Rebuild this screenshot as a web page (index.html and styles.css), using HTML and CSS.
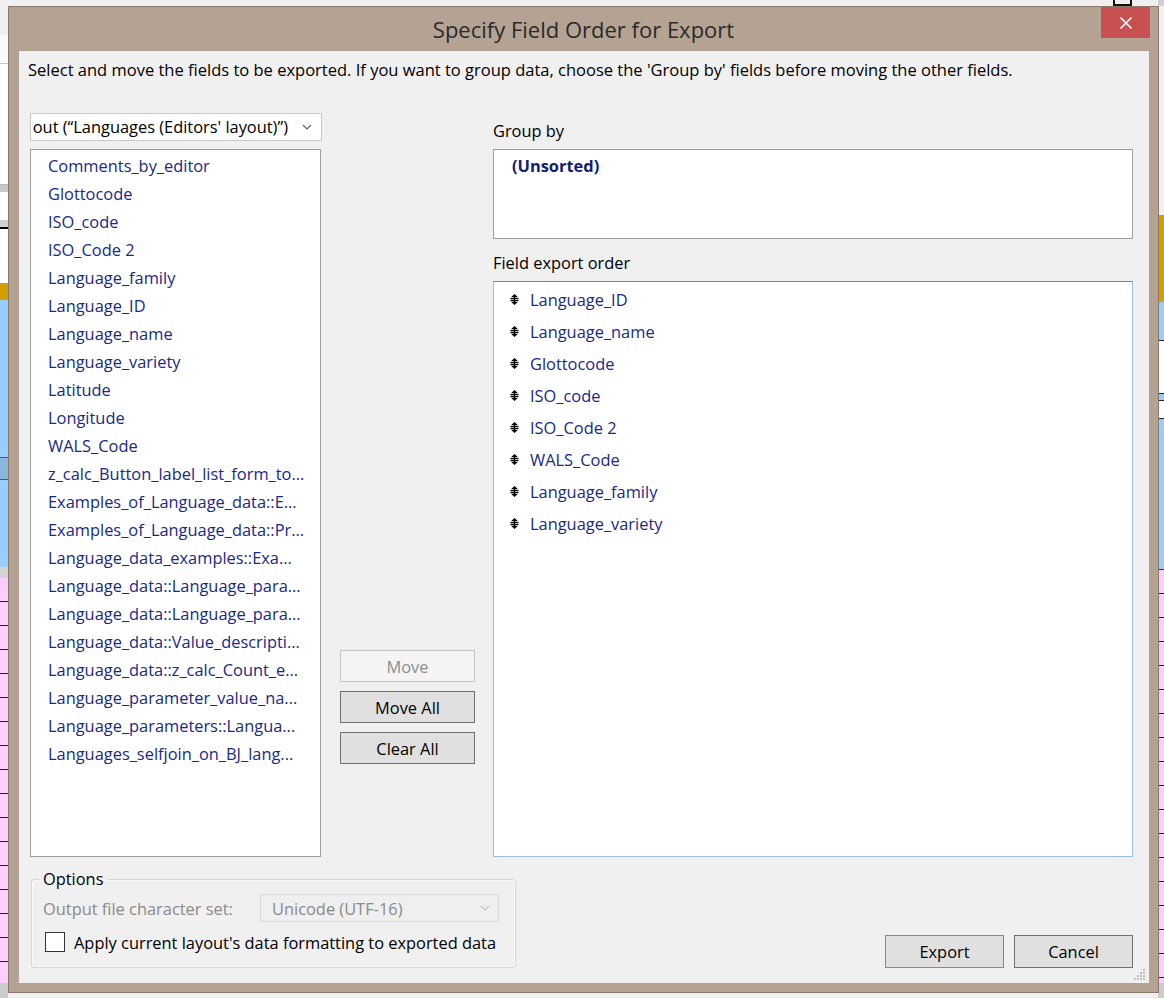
FILE: index.html
```html
<!DOCTYPE html>
<html lang="en">
<head>
<meta charset="utf-8">
<title>Specify Field Order for Export</title>
<link rel="stylesheet" href="styles.css">
</head>
<body>
<div class="backdrop">
  <div class="strip strip-left">
    <div class="seg s-head"></div>
    <div class="seg s-white1"></div>
    <div class="seg s-line"></div>
    <div class="seg s-white2"></div>
    <div class="seg s-grey"></div>
    <div class="seg s-white3"></div>
    <div class="seg s-grey2"></div>
    <div class="seg s-black"></div>
    <div class="seg s-white4"></div>
    <div class="seg s-gold"></div>
    <div class="seg s-blue1"></div>
    <div class="seg s-blue2"></div>
    <div class="seg s-blue3"></div>
    <div class="seg s-grey3"></div>
    <div class="seg s-pink"></div>
    <div class="seg s-foot"></div>
  </div>
  <div class="strip strip-right">
    <div class="seg r-head"></div>
    <div class="seg r-light"></div>
    <div class="seg r-gold"></div>
    <div class="seg r-blue"></div>
    <div class="seg r-box"></div>
    <div class="seg r-blue2"></div>
    <div class="seg r-box2"></div>
    <div class="seg r-blue3"></div>
    <div class="seg r-pink"></div>
    <div class="seg s-foot"></div>
  </div>
  <div class="top-icon"></div>
</div>

<div class="dialog">
  <div class="titlebar">
    <div class="title">Specify Field Order for Export</div>
    <div class="close" aria-label="Close">
      <svg width="14" height="14" viewBox="0 0 14 14"><path d="M1.5 1.5 L12.5 12.5 M12.5 1.5 L1.5 12.5" stroke="#fff" stroke-width="1.6" fill="none"/></svg>
    </div>
  </div>

  <div class="client">
    <p class="intro">Select and move the fields to be exported. If you want to group data, choose the 'Group by' fields before moving the other fields.</p>

    <div class="main">
      <div class="col-left">
        <div class="combo">
          <div class="combo-clip"><span class="combo-text">Current Layout (“Languages (Editors' layout)”)</span></div>
          <svg class="chev" width="10" height="6" viewBox="0 0 10 6"><path d="M1 1 L5 5 L9 1" stroke="#606060" stroke-width="1.2" fill="none"/></svg>
        </div>
        <ul class="listbox source">
          <li>Comments_by_editor</li>
          <li>Glottocode</li>
          <li>ISO_code</li>
          <li>ISO_Code 2</li>
          <li>Language_family</li>
          <li>Language_ID</li>
          <li>Language_name</li>
          <li>Language_variety</li>
          <li>Latitude</li>
          <li>Longitude</li>
          <li>WALS_Code</li>
          <li>z_calc_Button_label_list_form_to...</li>
          <li>Examples_of_Language_data::E...</li>
          <li>Examples_of_Language_data::Pr...</li>
          <li>Language_data_examples::Exa...</li>
          <li>Language_data::Language_para...</li>
          <li>Language_data::Language_para...</li>
          <li>Language_data::Value_descripti...</li>
          <li>Language_data::z_calc_Count_e...</li>
          <li>Language_parameter_value_na...</li>
          <li>Language_parameters::Langua...</li>
          <li>Languages_selfjoin_on_BJ_lang...</li>
        </ul>
      </div>

      <div class="col-mid">
        <button class="btn btn-disabled" type="button">Move</button>
        <button class="btn" type="button">Move All</button>
        <button class="btn" type="button">Clear All</button>
      </div>

      <div class="col-right">
        <div class="label">Group by</div>
        <div class="box group-box"><div class="unsorted">(Unsorted)</div></div>
        <div class="label label-order">Field export order</div>
        <ul class="box order-box">
          <li><svg class="grip" width="9" height="11" viewBox="0 0 9 11"><path d="M4.5 0 L8 3.2 H1 Z M1 7.8 H8 L4.5 11 Z" fill="#000"/><rect x="0.5" y="4" width="8" height="1.2" fill="#000"/><rect x="0.5" y="5.9" width="8" height="1.2" fill="#000"/><rect x="3.9" y="2" width="1.2" height="7" fill="#000"/></svg><span>Language_ID</span></li>
          <li><svg class="grip" width="9" height="11" viewBox="0 0 9 11"><path d="M4.5 0 L8 3.2 H1 Z M1 7.8 H8 L4.5 11 Z" fill="#000"/><rect x="0.5" y="4" width="8" height="1.2" fill="#000"/><rect x="0.5" y="5.9" width="8" height="1.2" fill="#000"/><rect x="3.9" y="2" width="1.2" height="7" fill="#000"/></svg><span>Language_name</span></li>
          <li><svg class="grip" width="9" height="11" viewBox="0 0 9 11"><path d="M4.5 0 L8 3.2 H1 Z M1 7.8 H8 L4.5 11 Z" fill="#000"/><rect x="0.5" y="4" width="8" height="1.2" fill="#000"/><rect x="0.5" y="5.9" width="8" height="1.2" fill="#000"/><rect x="3.9" y="2" width="1.2" height="7" fill="#000"/></svg><span>Glottocode</span></li>
          <li><svg class="grip" width="9" height="11" viewBox="0 0 9 11"><path d="M4.5 0 L8 3.2 H1 Z M1 7.8 H8 L4.5 11 Z" fill="#000"/><rect x="0.5" y="4" width="8" height="1.2" fill="#000"/><rect x="0.5" y="5.9" width="8" height="1.2" fill="#000"/><rect x="3.9" y="2" width="1.2" height="7" fill="#000"/></svg><span>ISO_code</span></li>
          <li><svg class="grip" width="9" height="11" viewBox="0 0 9 11"><path d="M4.5 0 L8 3.2 H1 Z M1 7.8 H8 L4.5 11 Z" fill="#000"/><rect x="0.5" y="4" width="8" height="1.2" fill="#000"/><rect x="0.5" y="5.9" width="8" height="1.2" fill="#000"/><rect x="3.9" y="2" width="1.2" height="7" fill="#000"/></svg><span>ISO_Code 2</span></li>
          <li><svg class="grip" width="9" height="11" viewBox="0 0 9 11"><path d="M4.5 0 L8 3.2 H1 Z M1 7.8 H8 L4.5 11 Z" fill="#000"/><rect x="0.5" y="4" width="8" height="1.2" fill="#000"/><rect x="0.5" y="5.9" width="8" height="1.2" fill="#000"/><rect x="3.9" y="2" width="1.2" height="7" fill="#000"/></svg><span>WALS_Code</span></li>
          <li><svg class="grip" width="9" height="11" viewBox="0 0 9 11"><path d="M4.5 0 L8 3.2 H1 Z M1 7.8 H8 L4.5 11 Z" fill="#000"/><rect x="0.5" y="4" width="8" height="1.2" fill="#000"/><rect x="0.5" y="5.9" width="8" height="1.2" fill="#000"/><rect x="3.9" y="2" width="1.2" height="7" fill="#000"/></svg><span>Language_family</span></li>
          <li><svg class="grip" width="9" height="11" viewBox="0 0 9 11"><path d="M4.5 0 L8 3.2 H1 Z M1 7.8 H8 L4.5 11 Z" fill="#000"/><rect x="0.5" y="4" width="8" height="1.2" fill="#000"/><rect x="0.5" y="5.9" width="8" height="1.2" fill="#000"/><rect x="3.9" y="2" width="1.2" height="7" fill="#000"/></svg><span>Language_variety</span></li>
        </ul>
      </div>
    </div>

    <div class="bottom">
      <fieldset class="options">
        <legend>Options</legend>
        <div class="opt-row">
          <span class="opt-label">Output file character set:</span>
          <div class="select-disabled">
            <span>Unicode (UTF-16)</span>
            <svg width="10" height="6" viewBox="0 0 10 6"><path d="M1 1 L5 5 L9 1" stroke="#c4c4c4" stroke-width="1.2" fill="none"/></svg>
          </div>
        </div>
        <label class="check-row">
          <span class="checkbox"></span>
          <span class="check-label">Apply current layout's data formatting to exported data</span>
        </label>
      </fieldset>
      <div class="actions">
        <button class="btn btn-wide btn-default" type="button">Export</button>
        <button class="btn btn-wide" type="button">Cancel</button>
      </div>
    </div>

    <svg class="resize-grip" width="14" height="14" viewBox="0 0 14 14">
      <g fill="#c2c2c2">
        <rect x="11" y="2" width="2" height="2"/>
        <rect x="8" y="5" width="2" height="2"/><rect x="11" y="5" width="2" height="2"/>
        <rect x="5" y="8" width="2" height="2"/><rect x="8" y="8" width="2" height="2"/><rect x="11" y="8" width="2" height="2"/>
        <rect x="2" y="11" width="2" height="2"/><rect x="5" y="11" width="2" height="2"/><rect x="8" y="11" width="2" height="2"/><rect x="11" y="11" width="2" height="2"/>
      </g>
    </svg>
  </div>
</div>
</body>
</html>
```

FILE: styles.css
```css
* { box-sizing: border-box; }

html, body {
  margin: 0;
  padding: 0;
}

body {
  width: 1164px;
  height: 998px;
  position: relative;
  overflow: hidden;
  background: #f0f0f0;
  font-family: "Open Sans", "Noto Sans", "DejaVu Sans", sans-serif;
  font-size: 16.4px;
  color: #000;
}

/* ---------- application behind the dialog ---------- */
.backdrop {
  position: absolute;
  inset: 0;
}

.strip {
  position: absolute;
  top: 0;
  height: 998px;
  display: flex;
  flex-direction: column;
}

.strip-left { left: 0; width: 8px; }
.strip-right { right: 0; width: 6px; }

.seg { flex: none; }
.s-head { height: 35px; background: #f0f0f0; }
.s-white1 { height: 28px; background: #fafafa; }
.s-line { height: 1px; background: #c8c8c8; }
.s-white2 { height: 121px; background: #fff; border-bottom: 1px solid #bbb; }
.s-grey { height: 7px; background: #c8c8c8; }
.s-white3 { height: 28px; background: #fff; }
.s-grey2 { height: 7px; background: #d0d0d0; }
.s-black { height: 2px; background: #000; }
.s-white4 { height: 54px; background: #fff; }
.s-gold { height: 17px; background: #d39e00; }
.s-blue1 { height: 157px; background: #99ccff; }
.s-blue2 { height: 23px; background: #8cb6e0; border-top: 1px solid #555; border-bottom: 1px solid #555; }
.s-blue3 { height: 87px; background: #99ccff; }
.s-grey3 { height: 11px; background: #d4d4d4; }
.s-pink {
  height: 405px;
  background: repeating-linear-gradient(to bottom, #ffccff 0 23px, #222 23px 24px);
}
.s-foot { flex: 1; background: #cccccc; }

.r-head { height: 6px; background: #cfcfcf; }
.r-light { height: 209px; background: #f0f0f0; }
.r-gold { height: 87px; background: #d39e00; }
.r-blue { height: 38px; background: #99ccff; }
.r-box { height: 54px; background: #fff; border: 1px solid #222; border-right: none; }
.r-blue2 { height: 6px; background: #99ccff; }
.r-box2 { height: 19px; background: #fff; border: 1px solid #222; border-right: none; }
.r-blue3 { height: 151px; background: #99ccff; border-bottom: 1px solid #333; }
.r-pink {
  height: 413px;
  background: repeating-linear-gradient(to bottom, #ffccff 0 23px, #222 23px 24px);
}

.top-icon {
  position: absolute;
  left: 1113px;
  top: 0;
  width: 19px;
  height: 6px;
  border: 2px solid #111;
  border-top: none;
}

/* ---------- dialog window ---------- */
.dialog {
  position: absolute;
  left: 8px;
  top: 6px;
  width: 1151px;
  height: 987px;
  background: #b4a393;
  border: 1px solid #877a6d;
  display: flex;
  flex-direction: column;
}

.titlebar {
  position: relative;
  height: 44px;
  flex: none;
  display: flex;
  align-items: center;
  justify-content: center;
}

.title {
  font-size: 22px;
  color: #2a2a2a;
  padding-bottom: 1px;
}

.close {
  position: absolute;
  top: 0;
  right: 8px;
  width: 49px;
  height: 31px;
  background: #c75050;
  display: flex;
  align-items: center;
  justify-content: center;
}

.client {
  position: relative;
  flex: 1;
  margin: 0 9px 9px 10px;
  background: #f0f0f0;
  display: flex;
  flex-direction: column;
}

.intro {
  margin: 0;
  padding: 9px 0 0 9px;
  line-height: 20px;
  font-size: 16.5px;
  white-space: nowrap;
}

/* ---------- main three columns ---------- */
.main {
  display: grid;
  grid-template-columns: 292px 135px 640px;
  column-gap: 18px;
  margin: 33px 0 0 11px;
  height: 744px;
}

.col-left {
  display: flex;
  flex-direction: column;
  min-height: 0;
}

.combo {
  height: 28px;
  flex: none;
  background: #fff;
  border: 1px solid #c8c8c8;
  display: flex;
  align-items: center;
  padding: 0 9px 0 2px;
}

.combo-clip {
  flex: 1;
  min-width: 0;
  overflow: hidden;
  display: flex;
  justify-content: flex-end;
  padding-right: 14px;
}

.combo-text {
  flex: none;
  white-space: nowrap;
  line-height: 20px;
}

.chev { flex: none; }

.listbox {
  list-style: none;
  margin: 8px 0 0 0;
  padding: 2px 0 0 17px;
  width: 291px;
  flex: 1;
  background: #fff;
  border: 1px solid #9c9c9c;
  color: #17298a;
  overflow: hidden;
}

.listbox li {
  height: 28px;
  line-height: 28px;
  white-space: nowrap;
}

.col-mid {
  display: flex;
  flex-direction: column;
  justify-content: flex-end;
  gap: 9px;
  padding-bottom: 93px;
}

.btn {
  height: 32px;
  margin: 0;
  padding: 0;
  background: #e0e0e0;
  border: 1px solid #707070;
  font-family: inherit;
  font-size: 16.4px;
  color: #000;
}

.btn-disabled {
  background: #f4f4f4;
  border-color: #c4c4c4;
  color: #8e8e8e;
}

.col-right {
  display: flex;
  flex-direction: column;
  min-height: 0;
}

.label {
  margin-top: 8px;
  line-height: 20px;
}

.label-order { margin-top: 14px; }

.box {
  margin-top: 8px;
  background: #fff;
  border: 1px solid #a0a0a0;
}

.group-box {
  height: 90px;
  flex: none;
  padding: 2px 0 0 18px;
}

.unsorted {
  line-height: 28px;
  font-weight: bold;
  color: #102070;
}

.order-box {
  list-style: none;
  flex: 1;
  margin-bottom: 0;
  padding: 1px 0 0 16px;
  border-color: #9cc0e4;
  border-top-color: #5a8cc2;
  color: #17298a;
}

.order-box li {
  height: 32px;
  display: flex;
  align-items: center;
  gap: 11px;
  white-space: nowrap;
}

.grip { flex: none; }

/* ---------- bottom area ---------- */
.bottom {
  display: flex;
  justify-content: space-between;
  align-items: flex-end;
  margin-top: 12px;
  padding: 0 16px 13px 12px;
}

.options {
  width: 485px;
  margin: 0;
  padding: 0 16px 12px 11px;
  border: 1px solid #d6d6d6;
  border-radius: 3px;
  box-shadow: inset 0 0 0 1px #fbfbfb;
}

.options legend {
  padding: 0 4px;
  margin-left: -4px;
  line-height: 20px;
}

.opt-row {
  display: flex;
  justify-content: space-between;
  align-items: center;
  margin-top: 5px;
}

.opt-label { color: #8a8a8a; white-space: nowrap; }

.select-disabled {
  width: 239px;
  height: 28px;
  background: #efefef;
  border: 1px solid #d9d9d9;
  display: flex;
  align-items: center;
  justify-content: space-between;
  padding: 0 8px 0 11px;
  color: #8a8a8a;
}

.check-row {
  display: flex;
  align-items: center;
  gap: 9px;
  height: 26px;
  margin-top: 7px;
  padding-left: 2px;
}

.check-label { white-space: nowrap; }

.checkbox {
  width: 20px;
  height: 20px;
  flex: none;
  background: #fff;
  border: 1px solid #333;
}

.actions {
  display: flex;
  gap: 10px;
}

.btn-wide {
  width: 119px;
  height: 33px;
}

.btn-default {
  border-color: #4a94e0;
}

.resize-grip {
  position: absolute;
  right: 3px;
  bottom: 2px;
}
```
